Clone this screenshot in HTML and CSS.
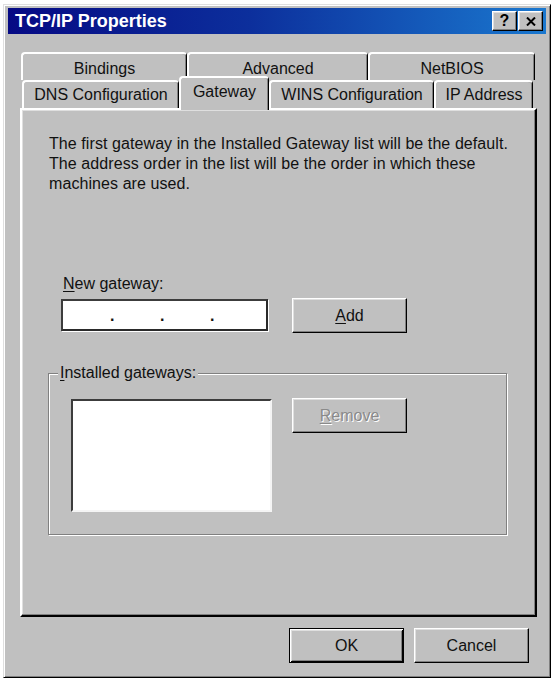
FILE: index.html
```html
<!DOCTYPE html>
<html lang="en">
<head>
<meta charset="utf-8">
<title>TCP/IP Properties</title>
<link rel="stylesheet" href="styles.css">
</head>
<body>
<div class="window">
  <div class="titlebar">
    <span class="title">TCP/IP Properties</span>
    <div class="tb-buttons">
      <button class="tb-btn help" type="button">?</button>
      <button class="tb-btn close" type="button">
        <svg width="10" height="9" viewBox="0 0 10 9" aria-hidden="true">
          <path d="M1 0.5 L9 8.5 M9 0.5 L1 8.5" stroke="#000" stroke-width="2" fill="none"/>
        </svg>
      </button>
    </div>
  </div>
  <div class="body">
    <div class="tabs">
      <div class="tabrow back">
        <div class="tab t-bind">Bindings</div>
        <div class="tab t-adv">Advanced</div>
        <div class="tab t-net">NetBIOS</div>
      </div>
      <div class="tabrow front">
        <div class="tab t-dns">DNS Configuration</div>
        <div class="tab t-gw active">Gateway</div>
        <div class="tab t-wins">WINS Configuration</div>
        <div class="tab t-ip">IP Address</div>
      </div>
    </div>
    <div class="panel">
      <p class="intro">The first gateway in the Installed Gateway list will be the default.<br>The address order in the list will be the order in which these<br>machines are used.</p>
      <div class="newgw">
        <div class="lbl"><u>N</u>ew gateway:</div>
        <div class="row">
          <div class="ipfield"><span>.</span><span>.</span><span>.</span></div>
          <button class="btn side" type="button"><u>A</u>dd</button>
        </div>
      </div>
      <fieldset class="group">
        <legend><u>I</u>nstalled gateways:</legend>
        <div class="row grouprow">
          <div class="listbox"></div>
          <button class="btn side disabled" type="button"><u>R</u>emove</button>
        </div>
      </fieldset>
    </div>
    <div class="footer">
      <button class="btn default" type="button">OK</button>
      <button class="btn" type="button">Cancel</button>
    </div>
  </div>
</div>
</body>
</html>
```

FILE: styles.css
```css
* { box-sizing: border-box; }

html, body {
  margin: 0;
  padding: 0;
  background: #fff;
}

body {
  font-family: "Liberation Sans", Arial, sans-serif;
  font-size: 16px;
  color: #111;
}

.window {
  margin: 4px 0 0 3px;
  width: 548px;
  height: 674px;
  background: #c0c0c0;
  border: 1px solid;
  border-color: #dfdfdf #000 #000 #dfdfdf;
  box-shadow: inset 1px 1px 0 #fff, inset -1px -1px 0 #808080;
  padding: 3px 4px;
}

.titlebar {
  height: 26px;
  display: flex;
  align-items: center;
  justify-content: space-between;
  padding: 0 3px 0 7px;
  background: linear-gradient(90deg, #060a84 0%, #0c2f9c 45%, #1a78cf 100%);
}

.title {
  color: #fff;
  font-weight: bold;
  font-size: 18px;
  line-height: 20px;
}

.tb-buttons {
  display: flex;
  gap: 1px;
}

.tb-btn {
  width: 25px;
  height: 20px;
  padding: 0;
  margin: 0;
  display: flex;
  align-items: center;
  justify-content: center;
  background: #c0c0c0;
  border: 1px solid;
  border-color: #fff #000 #000 #fff;
  box-shadow: inset -1px -1px 0 #808080, inset 1px 1px 0 #dfdfdf;
  font-family: "Liberation Sans", Arial, sans-serif;
  font-weight: bold;
  font-size: 16px;
  line-height: 1;
  color: #000;
}

.body {
  padding: 18px 9px 0 12px;
}

.tabs {
  height: 56px;
}

.tabrow {
  display: flex;
  height: 28px;
}

.tabrow.back { padding-left: 1px; }
.tabrow.front { padding-left: 2px; }

.tab {
  height: 28px;
  display: flex;
  align-items: center;
  justify-content: center;
  background: #c0c0c0;
  border-style: solid;
  border-width: 2px 1px 0 2px;
  border-color: #fff #000 transparent #fff;
  border-radius: 4px 4px 0 0;
  box-shadow: inset -1px 0 0 #808080;
  line-height: 18px;
  white-space: nowrap;
}

.tabrow.back .tab { padding-top: 3px; }

.t-bind { width: 166px; }
.t-adv { width: 181px; }
.t-net { width: 167px; }
.t-dns { width: 157px; }
.t-gw { width: 90px; }
.t-wins { width: 165px; }
.t-ip { width: 99px; }

.tab.active {
  position: relative;
  z-index: 1;
  height: 34px;
  margin-top: -4px;
  padding-bottom: 4px;
}

.panel {
  width: 517px;
  height: 509px;
  border: 2px solid;
  border-color: #fff #000 #000 #fff;
  box-shadow: inset -1px -1px 0 #808080, inset 1px 1px 0 #dfdfdf;
  padding: 24px 20px 0 27px;
}

.intro {
  margin: 0;
  line-height: 20px;
  letter-spacing: 0.08px;
}

.newgw {
  margin: 80px 0 0 12px;
}

.lbl {
  padding-left: 2px;
  line-height: 20px;
}

.row {
  display: flex;
  align-items: flex-start;
}

.newgw .row {
  margin-top: 5px;
}

.ipfield {
  width: 207px;
  height: 32px;
  background: #fff;
  border: 2px solid;
  border-color: #3c3c3c #2a2a2a #2a2a2a #3c3c3c;
  box-shadow: 1px 1px 0 #fff;
  display: flex;
  gap: 46px;
  padding-left: 47px;
  line-height: 30px;
  font-weight: bold;
}

.ipfield span {
  width: 4px;
}

.btn {
  width: 115px;
  height: 35px;
  padding: 0;
  margin: 0;
  background: #c0c0c0;
  border: 1px solid;
  border-color: #fff #000 #000 #fff;
  box-shadow: inset -1px -1px 0 #808080, inset 1px 1px 0 #dfdfdf;
  font-family: "Liberation Sans", Arial, sans-serif;
  font-size: 16px;
  color: #111;
}

.btn.side {
  margin: -1px 0 0 24px;
}

.btn.disabled {
  color: #8a8a8a;
  text-shadow: 1px 1px 0 #fff;
}

.btn.default {
  border-color: #000;
  box-shadow: inset 1px 1px 0 #fff, inset -1px -1px 0 #000, inset 2px 2px 0 #dfdfdf, inset -2px -2px 0 #808080;
}

.group {
  width: 459px;
  margin: 31px 0 0 -1px;
  padding: 17px 0 22px 0;
  border: 1px solid #808080;
  box-shadow: inset 1px 1px 0 #fff, 1px 1px 0 #fff;
  min-width: 0;
}

.group legend {
  margin-left: 9px;
  padding: 0 2px;
  line-height: 18px;
  background: #c0c0c0;
}

.grouprow {
  margin-left: 22px;
}

.grouprow .btn.side {
  margin-left: 20px;
}

.listbox {
  width: 201px;
  height: 113px;
  background: #fff;
  border: 2px solid;
  border-color: #3c3c3c #f4f4f4 #f4f4f4 #3c3c3c;
}

.footer {
  display: flex;
  justify-content: flex-end;
  gap: 10px;
  margin-top: 11px;
  padding-right: 8px;
}

u {
  text-decoration-thickness: 1px;
  text-underline-offset: 2px;
}
```
